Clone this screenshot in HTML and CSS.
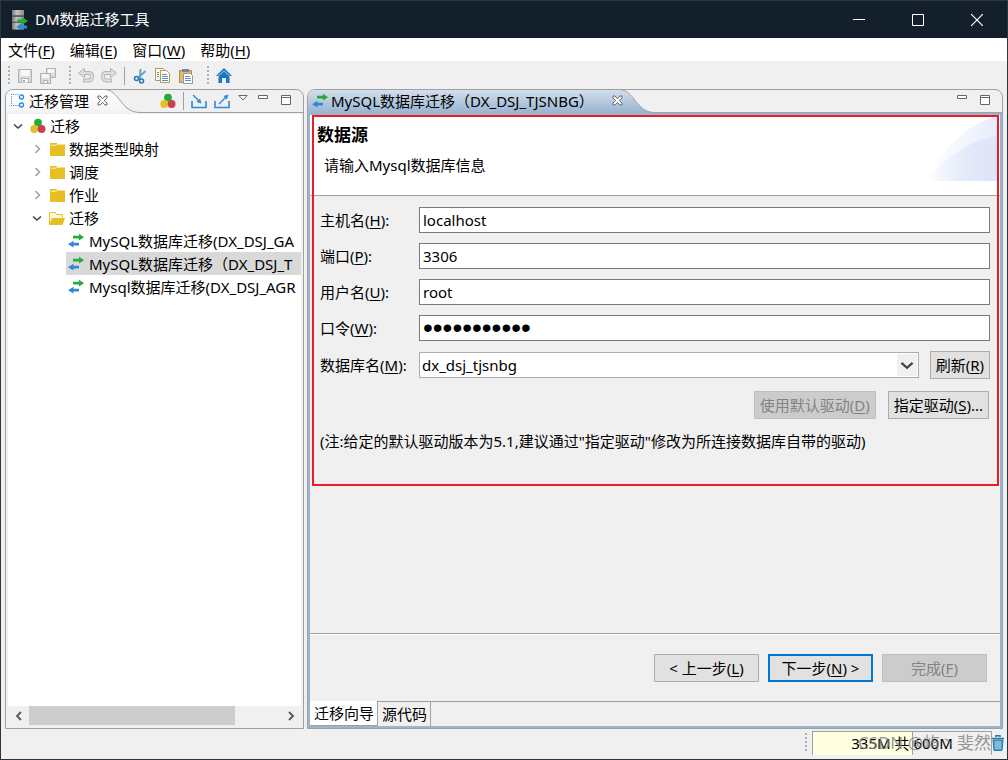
FILE: index.html
```html
<!DOCTYPE html>
<html lang="zh-CN">
<head>
<meta charset="utf-8">
<title>DM数据迁移工具</title>
<link rel="stylesheet" href="styles.css">
</head>
<body>
<svg class="defs" width="0" height="0" aria-hidden="true">
  <defs>
    <symbol id="balls" viewBox="0 0 16 16"><circle cx="8" cy="4.600" r="3.900" fill="#22ac38"/><circle cx="4.200" cy="11" r="3.900" fill="#e6bf22"/><circle cx="11.600" cy="11" r="3.900" fill="#d23c50"/></symbol>
    <symbol id="folder" viewBox="0 0 16 16"><path d="M1 2h7v1.500h8V15H1z" fill="#e6bf22"/><path d="M2 4.200h5l1-.9" fill="none" stroke="#fff" stroke-width=".8"/></symbol>
    <symbol id="folder-open" viewBox="0 0 16 16"><path d="M.5 14.500v-12h6l1 2h6v3" fill="#fff8dc" stroke="#e6bf22"/><path d="M3 8h13l-2.500 7H0z" fill="#e6bf22"/></symbol>
    <symbol id="swap" viewBox="0 0 16 16"><path d="M5 2.800h6V.8l5 3.400-5 3.400V5.600H5z" fill="#22ac38"/><path d="M11 9.800H5.500V7.800L0 11.200l5.500 3.400v-2H11z" fill="#2f88d8"/></symbol>
    <symbol id="close" viewBox="0 0 11 11"><path d="M1 1h2l2.500 2.800L8 1h2v2L7.300 5.500 10 8v2H8L5.500 7.300 3 10H1V8l2.700-2.500L1 3z" fill="#fff" stroke="#666"/></symbol>
    <symbol id="min" viewBox="0 0 10 10"><path d="M.5.500h9v3h-9z" fill="#fff" stroke="#666"/></symbol>
    <symbol id="max" viewBox="0 0 10 10"><path d="M.5.500h9v9h-9zM.5 2.500h9" fill="#fff" stroke="#666"/></symbol>
    <symbol id="down" viewBox="0 0 10 10"><path d="M1 3.500 5 7l4-3.500" fill="none" stroke="#444" stroke-width="1.600"/></symbol>
    <symbol id="right" viewBox="0 0 10 10"><path d="M3.500 1 7.500 5l-4 4" fill="none" stroke="#a0a0a0" stroke-width="1.500"/></symbol>
    <symbol id="arrow-l" viewBox="0 0 10 10"><path d="M7 1 3 5l4 4" fill="none" stroke="#555" stroke-width="1.800"/></symbol>
    <symbol id="arrow-r" viewBox="0 0 10 10"><path d="M3 1l4 4-4 4" fill="none" stroke="#555" stroke-width="1.800"/></symbol>
    <linearGradient id="tab-light" x1="0" y1="0" x2="0" y2="1"><stop offset="0" stop-color="#fff"/><stop offset="1" stop-color="#f3f3f3"/></linearGradient>
    <linearGradient id="tab-blue" x1="0" y1="0" x2="0" y2="1"><stop offset="0" stop-color="#d3dfeb"/><stop offset="1" stop-color="#99b4d1"/></linearGradient>
    <linearGradient id="swoosh" x1="0" y1="0" x2="1" y2="0"><stop offset="0" stop-color="#dbe3f6" stop-opacity="0"/><stop offset="1" stop-color="#d5def5"/></linearGradient>
    <linearGradient id="swoosh-soft" x1="0" y1="0" x2="1" y2="0"><stop offset="0" stop-color="#e8eefb" stop-opacity="0"/><stop offset="1" stop-color="#e8edfa"/></linearGradient>
    <linearGradient id="slab" x1="0" y1="0" x2="1" y2="0"><stop offset="0" stop-color="#777"/><stop offset=".4" stop-color="#c4c4c4"/><stop offset="1" stop-color="#8c8c8c"/></linearGradient>
  </defs>
</svg>
<div class="window">
  <header class="titlebar">
    <svg class="app-icon" viewBox="0 0 18 20"><path d="M2 0h12v6H2zM2 6.500h12v6H2zM2 13h12v6.500H2z" fill="url(#slab)"/><path d="M2 5.200h12v1H2zM2 11.700h12v1H2z" fill="#555"/><path d="M7 9.500h5V7l6 4-6 4v-2.500H7z" fill="#22ac38"/><path d="M17 15.500h-5V13l-6 4 6 3v-1.500h5z" fill="#2f88d8"/></svg>
    <h1 class="app-title">DM数据迁移工具</h1>
    <button class="caption" aria-label="最小化"><svg viewBox="0 0 12 12"><path d="M0 5.500h12" stroke="#fff"/></svg></button>
    <button class="caption" aria-label="最大化"><svg viewBox="0 0 12 12"><path d="M.5.500h11v11H.5z" fill="none" stroke="#fff"/></svg></button>
    <button class="caption" aria-label="关闭"><svg viewBox="0 0 12 12"><path d="m0 0 12 12M12 0 0 12" stroke="#fff" stroke-width="1.200"/></svg></button>
  </header>
  <nav class="menubar">
    <button>文件(<u>F</u>)</button>
    <button>编辑(<u>E</u>)</button>
    <button>窗口(<u>W</u>)</button>
    <button>帮助(<u>H</u>)</button>
  </nav>
  <div class="toolbar">
    <span class="grip"></span>
    <button aria-label="保存"><svg viewBox="0 0 16 16"><path d="M1.500 1.500h13v13h-13z" fill="#dcdcdc" stroke="#b0b0b0"/><path d="M3.500 2h9v6h-9z" fill="#f7f7f7"/><path d="M4.500 14.500v-4h7v4" fill="#f7f7f7" stroke="#b0b0b0"/><path d="M6 12h2v2H6z" fill="#aaa"/></svg></button>
    <button aria-label="全部保存"><svg viewBox="0 0 16 16"><path d="M6.500.500h9v9h-9z" fill="#dcdcdc" stroke="#b0b0b0"/><path d="M8 1h6v4H8z" fill="#f7f7f7"/><path d="M.5 5.500h10v10H.5z" fill="#dcdcdc" stroke="#b0b0b0"/><path d="M2 6h7v4H2z" fill="#f7f7f7"/><path d="M3.500 15v-2.500h4V15" fill="#f7f7f7" stroke="#b0b0b0"/></svg></button>
    <span class="grip wide"></span>
    <button aria-label="撤销"><svg viewBox="0 0 16 16"><path d="M3 5h8q3 0 3 3.500T11 12.500H5" fill="none" stroke="#b4b4b4" stroke-width="4"/><path d="M6.500.500v9L.5 5z" fill="#dedede" stroke="#b4b4b4"/><path d="M4 5h7q3 0 3 3.500t-3 4H5.800" fill="none" stroke="#dedede" stroke-width="2.200"/></svg></button>
    <button aria-label="重做"><svg viewBox="0 0 16 16"><path d="M13 5H5Q2 5 2 8.500t3 4h6" fill="none" stroke="#b4b4b4" stroke-width="4"/><path d="M9.500.500v9L15.500 5z" fill="#dedede" stroke="#b4b4b4"/><path d="M12 5H5Q2 5 2 8.500t3 4h5.200" fill="none" stroke="#dedede" stroke-width="2.200"/></svg></button>
    <span class="rule"></span>
    <button aria-label="剪切"><svg viewBox="0 0 16 16"><path d="M8.500 1 8 11M13.500 3 6 10" stroke="#6ba1cb" stroke-width="2"/><circle cx="4.500" cy="10.500" r="2" fill="#e3f0fa" stroke="#2875b0" stroke-width="1.500"/><circle cx="9.500" cy="13" r="2" fill="#e3f0fa" stroke="#2875b0" stroke-width="1.500"/></svg></button>
    <button aria-label="复制"><svg viewBox="0 0 16 16"><path d="M.5.500h8l1 1v11h-9z" fill="#fffaf0" stroke="#b89a55"/><path d="M5.500 2.500h6l3 3v9h-9z" fill="#fff" stroke="#b89a55"/><path d="M2 4.500h2m-2 2h2m-2 2h2M7 6.500h5m-5 2h6m-6 2h6m-6 2h6" stroke="#648bb5"/></svg></button>
    <button aria-label="粘贴"><svg viewBox="0 0 16 16"><path d="M1.500 2.500h12v12h-12z" fill="#e9b86a" stroke="#bd8a3c"/><path d="M4 1h7v3H4z" fill="#77879b"/><path d="M5.500 5.500h7l2 2v8h-9z" fill="#fff" stroke="#8c9cae"/><path d="M7 8.500h5m-5 2h6m-6 2h6" stroke="#648bb5"/></svg></button>
    <span class="grip wide"></span>
    <button aria-label="主页"><svg viewBox="0 0 16 16"><path d="M8 0l8 8H0zM2.500 8.500 8 4l5.500 4.500V15H10v-5H6v5H2.500z" fill="#1878c8"/><path d="M2.300 8.200 8 2.800l5.700 5.400" fill="none" stroke="#efefef" stroke-width=".7"/></svg></button>
  </div>
  <main class="workbench">
    <section class="panel">
      <div class="panel-head">
        <div class="tab">
          <svg class="icon" viewBox="0 0 16 16"><path d="M1 1.500h8M1 12.500h8M1.500 1v12" stroke="#2f88d8" stroke-dasharray="1 1.200" fill="none"/><circle cx="11.500" cy="4" r="2" fill="#fff" stroke="#2f88d8" stroke-width="1.300"/><circle cx="11.500" cy="12" r="2" fill="#fff" stroke="#2f88d8" stroke-width="1.300"/></svg>
          <span class="tab-text">迁移管理</span>
          <button class="tab-close" aria-label="关闭"><svg><use href="#close"/></svg></button>
        </div>
        <svg class="tail" viewBox="0 0 36 24"><path d="M0 .5C16 .5 16 23.500 36 23.500V24H0z" fill="url(#tab-light)"/><path d="M0 .5C16 .5 16 23.500 36 23.500" fill="none" stroke="#a0a0a0"/></svg>
        <div class="head-tools">
          <button aria-label="迁移"><svg class="icon"><use href="#balls"/></svg></button>
          <span class="rule"></span>
          <button aria-label="导入"><svg class="icon" viewBox="0 0 16 16"><path d="M1 8v6.500h14V8" fill="none" stroke="#2f88d8" stroke-width="1.600"/><path d="m2 2 6 6" stroke="#2f88d8" stroke-width="1.400"/><path d="M10.500 10.500 5.500 9l3.500-3.500z" fill="#2f88d8"/></svg></button>
          <button aria-label="导出"><svg class="icon" viewBox="0 0 16 16"><path d="M1 8v6.500h14V8" fill="none" stroke="#2f88d8" stroke-width="1.600"/><path d="m5 11 7-7" stroke="#2f88d8" stroke-width="1.400"/><path d="M14.500 1.500 13 6.500 9.500 3z" fill="#2f88d8"/></svg></button>
          <button class="state view-menu" aria-label="菜单"><svg viewBox="0 0 10 10"><path d="M.8.500h8.400L5 5z" fill="#fff" stroke="#666"/></svg></button>
          <button class="state" aria-label="最小化"><svg><use href="#min"/></svg></button>
          <button class="state" aria-label="最大化"><svg><use href="#max"/></svg></button>
        </div>
      </div>
      <div class="tree-box">
        <ul class="tree">
          <li class="row"><svg class="twist"><use href="#down"/></svg><svg class="icon"><use href="#balls"/></svg><span>迁移</span></li>
          <li class="row level-2"><svg class="twist"><use href="#right"/></svg><svg class="icon"><use href="#folder"/></svg><span>数据类型映射</span></li>
          <li class="row level-2"><svg class="twist"><use href="#right"/></svg><svg class="icon"><use href="#folder"/></svg><span>调度</span></li>
          <li class="row level-2"><svg class="twist"><use href="#right"/></svg><svg class="icon"><use href="#folder"/></svg><span>作业</span></li>
          <li class="row level-2"><svg class="twist"><use href="#down"/></svg><svg class="icon"><use href="#folder-open"/></svg><span>迁移</span></li>
          <li class="row level-3"><svg class="icon"><use href="#swap"/></svg><span>MySQL数据库迁移(DX_DSJ_GA</span></li>
          <li class="row level-3 selected"><svg class="icon"><use href="#swap"/></svg><span>MySQL数据库迁移（DX_DSJ_T</span></li>
          <li class="row level-3"><svg class="icon"><use href="#swap"/></svg><span>Mysql数据库迁移(DX_DSJ_AGR</span></li>
        </ul>
        <div class="scrollbar">
          <button aria-label="向左滚动"><svg><use href="#arrow-l"/></svg></button>
          <div class="track"><div class="thumb"></div></div>
          <button aria-label="向右滚动"><svg><use href="#arrow-r"/></svg></button>
        </div>
      </div>
    </section>
    <section class="panel editor">
      <div class="panel-head">
        <div class="tab">
          <svg class="icon"><use href="#swap"/></svg>
          <span class="tab-text">MySQL数据库迁移（DX_DSJ_TJSNBG）</span>
          <button class="tab-close" aria-label="关闭"><svg><use href="#close"/></svg></button>
        </div>
        <svg class="tail" viewBox="0 0 36 24"><path d="M0 .5C16 .5 16 23.500 36 23.500V24H0z" fill="url(#tab-blue)"/><path d="M0 .5C16 .5 16 23.500 36 23.500" fill="none" stroke="#a0a0a0"/></svg>
        <div class="head-tools">
          <button class="state" aria-label="最小化"><svg><use href="#min"/></svg></button>
          <button class="state" aria-label="最大化"><svg><use href="#max"/></svg></button>
        </div>
      </div>
      <div class="editor-body">
        <form class="source">
          <div class="banner">
            <svg class="banner-art" viewBox="0 0 72 66"><path d="M0 66Q26 14 72 0V66z" fill="url(#swoosh-soft)"/><path d="M0 66Q34 26 72 21V66z" fill="url(#swoosh)"/><path d="M28 66Q40 20 72 0V66z" fill="url(#swoosh-soft)" opacity=".5"/></svg>
            <h2>数据源</h2>
            <p>请输入Mysql数据库信息</p>
          </div>
          <div class="fields">
            <label for="host">主机名(<u>H</u>):</label><input id="host" type="text" value="localhost">
            <label for="port">端口(<u>P</u>):</label><input id="port" type="text" value="3306">
            <label for="user">用户名(<u>U</u>):</label><input id="user" type="text" value="root">
            <label for="pass">口令(<u>W</u>):</label><input id="pass" type="password" value="abcdefghijk">
            <label for="db">数据库名(<u>M</u>):</label>
            <div class="db-row">
              <div class="combo"><select id="db"><option>dx_dsj_tjsnbg</option></select><svg><use href="#down"/></svg></div>
              <button type="button" class="btn">刷新(<u>R</u>)</button>
            </div>
          </div>
          <div class="drivers">
            <button type="button" class="btn" disabled>使用默认驱动(<u>D</u>)</button>
            <button type="button" class="btn">指定驱动(<u>S</u>)...</button>
          </div>
          <p class="note">(注:给定的默认驱动版本为5.1,建议通过"指定驱动"修改为所连接数据库自带的驱动)</p>
        </form>
        <div class="steps">
          <button class="btn">&lt; 上一步(<u>L</u>)</button>
          <button class="btn primary">下一步(<u>N</u>) &gt;</button>
          <button class="btn" disabled>完成(<u>F</u>)</button>
        </div>
        <div class="page-tabs">
          <button class="active">迁移向导</button>
          <button>源代码</button>
        </div>
      </div>
    </section>
  </main>
  <footer class="status">
    <span class="grip"></span>
    <div class="heap">335M 共 600M<span class="watermark">CSDN @屿丶斐然</span></div>
    <button class="trash" aria-label="垃圾回收"><svg viewBox="0 0 12 16"><path d="M0 3.500h12M4 2V.8h4V2" fill="none" stroke="#2478a8" stroke-width="1.600"/><path d="M1 5h10l-1 10.500H2z" fill="#58a0cc" stroke="#2478a8"/><path d="M4 6v8m2-8v8m2-8v8" stroke="#c4e2f2" stroke-width=".8"/></svg></button>
  </footer>
</div>
</body>
</html>
```

FILE: styles.css
```css
* { box-sizing: border-box; }

body {
  margin: 0;
  font: 15px/20px "Noto Sans", "Noto Sans CJK SC", sans-serif;
  color: #000;
}

button, input, select { font: inherit; color: inherit; }
button { padding: 0; border: 0; background: none; }
svg { display: block; flex: none; }
h1, h2, p, ul { margin: 0; padding: 0; }
u { text-underline-offset: 2px; text-decoration-thickness: 1px; }

.defs { position: absolute; }
.icon { width: 16px; height: 16px; }

.window {
  display: flex;
  flex-direction: column;
  min-height: 100vh;
  border: 1px solid #2a3642;
  background: #f0f0f0;
}

.titlebar {
  display: flex;
  align-items: center;
  height: 37px;
  padding: 0 1px 0 9px;
  background: #141f2c;
  color: #fff;
}
.app-icon { width: 18px; height: 20px; }
.app-title { flex: 1; margin-left: 7px; padding-bottom: 2px; font-size: 15px; font-weight: 400; }
.caption { display: grid; place-items: center; width: 59px; height: 37px; }
.caption svg { width: 12px; height: 12px; }

.menubar {
  display: flex;
  gap: 15px;
  height: 23px;
  padding-left: 7px;
  background: #fff;
}

.toolbar {
  display: flex;
  align-items: center;
  gap: 7px;
  height: 28px;
  padding: 2px 7px 0;
}
.toolbar svg { width: 16px; height: 16px; }
.grip {
  width: 2px;
  height: 20px;
  background: repeating-linear-gradient(#b0b0b0 0 2px, transparent 2px 4px);
}
.grip.wide { margin-left: 6px; }
.rule { width: 1px; height: 18px; background: #a0a0a0; }

.workbench {
  display: grid;
  grid-template-columns: 299px minmax(0, 1fr);
  gap: 3px;
  flex: 1;
  padding: 0 4px;
}
.panel {
  display: flex;
  flex-direction: column;
  min-width: 0;
  border: 1px solid #a0a0a0;
  border-radius: 8px 8px 0 0;
}
.panel-head { display: flex; height: 23px; }
.tab {
  display: flex;
  align-items: center;
  padding: 0 0 2px 4px;
  border-radius: 7px 0 0;
  background: linear-gradient(#fff, #f3f3f3);
  white-space: nowrap;
}
.tab-text { margin: 0 8px 0 3px; }
.tab-close { z-index: 1; margin-right: -4px; }
.tab-close svg { width: 11px; height: 11px; }
.tail { width: 36px; height: 24px; margin-top: -1px; }
.head-tools {
  display: flex;
  flex: 1;
  align-items: center;
  justify-content: flex-end;
  gap: 7px;
  padding-right: 12px;
  border-bottom: 1px solid #a0a0a0;
}
.state { align-self: flex-start; margin: 5px 0 0 6px; }
.state svg { width: 10px; height: 10px; }
.view-menu { margin: 5px -3px 0 1px; }

.tree-box {
  display: flex;
  flex: 1;
  flex-direction: column;
  margin: 1px 2px 2px;
  background: #fff;
}
.tree { flex: 1; list-style: none; overflow: hidden; }
.row {
  display: flex;
  align-items: center;
  gap: 4px;
  height: 23px;
  padding-left: 5px;
  white-space: nowrap;
}
.twist { width: 10px; height: 10px; margin-right: 3px; }
.level-2 { padding-left: 24px; }
.level-3 { margin-left: 58px; padding-left: 2px; gap: 5px; }
.selected { background: #d9d9d9; }

.scrollbar { display: flex; height: 20px; background: #f0f0f0; }
.scrollbar button { display: grid; place-items: center; width: 21px; }
.scrollbar svg { width: 10px; height: 10px; }
.track { flex: 1; }
.thumb { width: 82%; height: 19px; background: #cdcdcd; }

.editor .tab { background: linear-gradient(#d3dfeb, #99b4d1); }
.editor .tab-text { margin-right: 18px; }
.editor-body {
  display: flex;
  flex: 1;
  flex-direction: column;
  border: 2px solid #99b4d1;
}

.source { position: relative; padding-bottom: 35px; }
.source::after {
  content: "";
  position: absolute;
  inset: 0 1px 0 2px;
  border: 2px solid #ed1c24;
  pointer-events: none;
}
.banner {
  position: relative;
  height: 81px;
  padding: 10px 7px;
  border-bottom: 1px solid #a0a0a0;
  background: #fff;
}
.banner h2 { font-size: 17px; line-height: 20px; }
.banner p { padding: 10px 7px; }
.banner-art { position: absolute; top: 0; right: 2px; width: 72px; height: 66px; }

.fields {
  display: grid;
  grid-template-columns: 89px 1fr;
  gap: 10px;
  align-items: center;
  padding: 11px 10px 0;
}
.fields label { white-space: nowrap; }
.fields input {
  width: 100%;
  height: 26px;
  padding: 0 3px;
  border: 1px solid #7a7a7a;
  background: #fff;
}
.fields input[type="password"] { font: 28px/24px "Liberation Sans", sans-serif; }
.db-row { display: flex; align-items: center; gap: 11px; }
.combo { position: relative; flex: 1; }
.combo select {
  width: 100%;
  height: 26px;
  padding: 0 2px;
  border: 1px solid #adadad;
  border-radius: 0;
  background: #fff;
  appearance: none;
}
.combo svg {
  position: absolute;
  top: 2px;
  right: 2px;
  width: 20px;
  height: 22px;
  padding: 4px 3px;
  background: #f0f0f0;
  pointer-events: none;
}

.btn {
  height: 28px;
  padding: 0 5px;
  border: 1px solid #adadad;
  background: #e1e1e1;
  white-space: nowrap;
}
.btn:disabled { border-color: #bfbfbf; background: #ccc; color: #838383; }
.btn.primary { border: 2px solid #0078d7; }

.drivers {
  display: flex;
  justify-content: flex-end;
  gap: 12px;
  padding: 12px 11px 0 0;
}
.note { padding: 12px 10px 0; }

.steps {
  display: flex;
  align-items: center;
  justify-content: flex-end;
  gap: 9px;
  height: 68px;
  margin-top: auto;
  padding-right: 13px;
  border-top: 1px solid #a0a0a0;
  box-shadow: inset 0 1px #fff;
}
.steps .btn { width: 105px; }

.page-tabs { display: flex; height: 25px; border-top: 1px solid #a0a0a0; }
.page-tabs button { padding: 0 3px 0 4px; border-right: 1px solid #a0a0a0; }
.page-tabs .active {
  margin-top: -1px;
  border-bottom: 1px solid #a0a0a0;
  background: #fff;
}

.status {
  display: flex;
  align-items: flex-start;
  justify-content: flex-end;
  height: 30px;
  padding: 2px 3px 0;
}
.status .grip { margin-top: 2px; }
.heap {
  position: relative;
  width: 180px;
  height: 24px;
  margin-left: 5px;
  border: 1px solid #a0a0a0;
  border-bottom: 0;
  background: linear-gradient(90deg, #ffffe1 0 99px, #a0a0a0 99px 100px, #f0f0f0 100px);
  line-height: 23px;
  text-align: center;
  white-space: nowrap;
}
.watermark {
  position: absolute;
  top: -1px;
  right: 0;
  color: #808080;
  font-size: 17px;
  opacity: .8;
}
.trash { margin-top: 4px; }
.trash svg { width: 12px; height: 16px; }
```
